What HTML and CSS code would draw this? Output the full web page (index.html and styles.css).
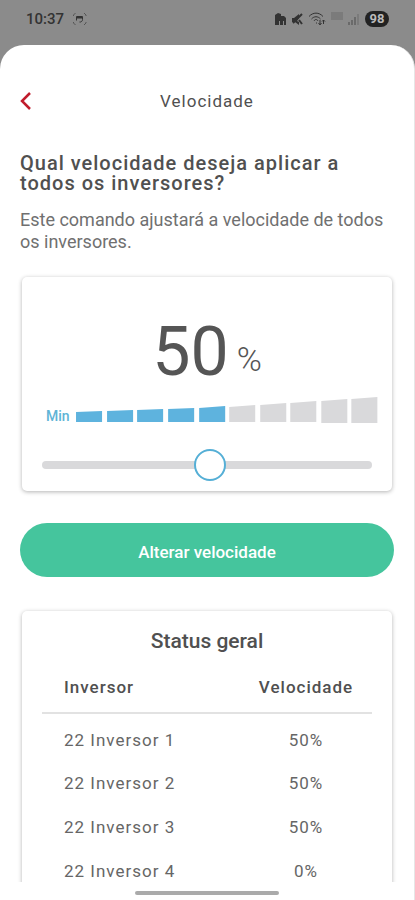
FILE: index.html
```html
<!DOCTYPE html>
<html lang="pt-BR">
<head>
<meta charset="UTF-8">
<meta name="viewport" content="width=device-width, initial-scale=1.0">
<title>Velocidade</title>

<link rel="stylesheet" href="styles.css">

</head>
<body>

<!-- Phone status bar -->
<div class="status-bar">
    <span class="clock">10:37</span>
    <svg class="capture-icon" width="16" height="14" viewBox="0 0 16 14" fill="none" stroke="#333" stroke-width="1">
        <path d="M1.500 4V3l2-2M12 1l2 2v1M1.500 10v1l2 2M12 13l2-2v-1" stroke="#555"/>
        <path d="M4.500 8.500V4.500h6v3a2.500 2.500 0 0 1-3 2.500"/>
        <path d="M5 5.500h5" stroke-width="2"/>
    </svg>

    <div class="status-icons">
        <svg width="12" height="14" viewBox="0 0 12 14" fill="#333">
            <path d="M1 3l3-2 3 1v2h3l2 2v7h-2V9H9v4H6V9H5v4H1z"/>
        </svg>
        <svg width="12" height="14" viewBox="0 0 12 14">
            <path d="M1 6h2l5-4v4l-2 3 2 1v3L4 10H1z" fill="#333"/>
            <path d="M11 2L2 11M8 8l3 4" stroke="#333" stroke-width="2" fill="none"/>
        </svg>
        <svg width="18" height="14" viewBox="0 0 18 14" fill="none" stroke="#333" stroke-width="1">
            <path d="M1 4.500C5 0 11 0 15 4.500M3.500 7C6 4 10 4 12.500 7M6 9c1-2 3-2 4 0"/>
            <path d="M8 11h1M12 8v4M10.500 11l1.500 2 1.500-2M15.500 12V8M14 9.500L15.500 8 17 9.500"/>
        </svg>
        <svg width="12" height="14" viewBox="0 0 12 14" fill="#7b7b7b">
            <path d="M0 0h12v8H0z"/>
        </svg>
        <svg width="12" height="14" viewBox="0 0 12 14" fill="#6a6a6a">
            <path d="M0 10h2v3H0zM3 8h2v5H3zM6 5h2v8H6z"/>
            <path d="M9 2h2v11H9z" fill="#7b7b7b"/>
        </svg>
        <span class="battery">98</span>
    </div>
</div>

<main class="sheet">
    <div class="scroll-area">
        <header class="top">
            <button class="back" type="button" aria-label="Voltar">
                <svg width="12" height="18" viewBox="0 0 12 18" fill="none" stroke="#c01c2c" stroke-width="2.500">
                    <path d="M10 1L2 9l8 8"/>
                </svg>
            </button>
            <h1>Velocidade</h1>
        </header>

        <h2 class="question">Qual velocidade deseja aplicar a todos os inversores?</h2>
        <p class="description">Este comando ajustará a velocidade de todos os inversores.</p>

        <section class="card speed-card">
            <div class="value">
                <span class="number">50</span>
                <span class="percent">%</span>
            </div>

            <div class="level">
                <label for="speed">Min</label>
                <svg class="bars" viewBox="0 0 302 28">
                    <g fill="#5eb3de">
                        <path d="M0 15l26-1v11H0z"/>
                        <path d="M31 14l26-1v12H31z"/>
                        <path d="M61 13l26-1v13H61z"/>
                        <path d="M92 12l26-1v14H92z"/>
                        <path d="M123 11l26-2v16h-26z"/>
                    </g>
                    <g fill="#d9d9db">
                        <path d="M153 10l26-2v17h-26z"/>
                        <path d="M184 8l26-2v19h-26z"/>
                        <path d="M214 6l26-2v21h-26z"/>
                        <path d="M245 4l26-2v24h-26z"/>
                        <path d="M275 2l26-2v26h-26z"/>
                    </g>
                </svg>
            </div>

            <input type="range" id="speed" class="slider" min="0" max="100" value="51">
        </section>

        <button class="apply" type="button">Alterar velocidade</button>

        <section class="card status-card">
            <h2>Status geral</h2>
            <table>
                <thead>
                    <tr><th scope="col">Inversor</th><th scope="col">Velocidade</th></tr>
                </thead>
                <tbody>
                    <tr><td>22 Inversor 1</td><td>50%</td></tr>
                    <tr><td>22 Inversor 2</td><td>50%</td></tr>
                    <tr><td>22 Inversor 3</td><td>50%</td></tr>
                    <tr><td>22 Inversor 4</td><td>0%</td></tr>
                </tbody>
            </table>
        </section>
    </div>

    <!-- Gesture bar of the phone -->
    <div class="gesture-bar"><span></span></div>
</main>

</body>
</html>
```
FILE: styles.css
```css
* {
    box-sizing: border-box;
}

body {
    margin: 0;
    height: 100vh;
    display: flex;
    flex-direction: column;
    background-color: #8b8b8b;
    color: #505050;
    font-family: Roboto, sans-serif;
    font-size: 17px;
}

h1, h2, p {
    margin: 0;
    font-weight: 500;
}

button {
    font-family: inherit;
    border: none;
    cursor: pointer;
}

/* Phone status bar */
.status-bar {
    display: flex;
    align-items: center;
    height: 45px;
    flex-shrink: 0;
    padding: 0 26px 7px;
}

.clock {
    font-size: 15px;
    font-weight: 500;
    color: #333;
    margin-right: 8px;
}

.status-icons {
    display: flex;
    align-items: center;
    gap: 5px;
    margin-left: auto;
}

.battery {
    width: 24px;
    height: 16px;
    border-radius: 8px;
    background-color: #222;
    color: #bbb;
    font-size: 13px;
    font-weight: 700;
    line-height: 16px;
    text-align: center;
}

/* White sheet over the darkened screen */
.sheet {
    flex: 1;
    min-height: 0;
    display: flex;
    flex-direction: column;
    background-color: #fff;
    border-radius: 24px 24px 0 0;
    border-right: 1px solid #e6e6e6;
}

.scroll-area {
    flex: 1;
    min-height: 0;
    overflow: hidden;
    padding: 0 20px;
}

.top {
    display: grid;
    grid-template-columns: 32px 1fr 32px;
    align-items: center;
    padding-top: 40px;
}

.top h1 {
    font-size: 17px;
    line-height: 32px;
    font-weight: 400;
    letter-spacing: 1px;
    text-align: center;
}

.back {
    display: flex;
    align-items: center;
    height: 32px;
    padding: 0;
    background: none;
}

.question {
    margin-top: 36px;
    font-size: 20px;
    line-height: 20px;
    letter-spacing: 1px;
}

.description {
    margin-top: 16px;
    font-size: 18px;
    line-height: 22px;
    font-weight: 400;
    color: #707070;
}

.card {
    margin: 0 2px;
    background-color: #fff;
    border-radius: 5px;
    box-shadow: 0 1px 4px rgba(0, 0, 0, 0.3);
}

/* Speed picker */
.speed-card {
    margin-top: 24px;
    padding: 40px 20px 10px;
}

.value {
    display: flex;
    justify-content: center;
    align-items: flex-end;
    gap: 8px;
    color: #555;
}

.number {
    font-size: 68px;
    line-height: 70px;
}

.percent {
    font-size: 34px;
    line-height: 56px;
    font-weight: 300;
}

.level {
    display: flex;
    align-items: flex-end;
    gap: 6px;
    padding-left: 4px;
    margin-right: -6px;
    margin-top: 10px;
}

.level label {
    font-size: 14px;
    line-height: 18px;
    font-weight: 500;
    color: #5fb4d6;
}

.bars {
    flex: 1;
    min-width: 0;
}

.slider {
    display: block;
    appearance: none;
    width: 100%;
    height: 32px;
    margin: 24px 0 0;
    background: none;
}

.slider::-webkit-slider-runnable-track {
    height: 8px;
    border-radius: 4px;
    background-color: #d9d9db;
}

.slider::-webkit-slider-thumb {
    appearance: none;
    width: 32px;
    height: 32px;
    margin-top: -12px;
    border: 2px solid #55afd6;
    border-radius: 50%;
    background-color: #fff;
}

.apply {
    display: block;
    width: 100%;
    height: 54px;
    padding-top: 5px;
    margin-top: 32px;
    border-radius: 27px;
    background-color: #45c59d;
    color: #fff;
    font-size: 17px;
    font-weight: 500;
}

/* Table with the state of every inverter */
.status-card {
    margin-top: 34px;
    padding: 16px 20px;
}

.status-card h2 {
    font-size: 21px;
    line-height: 28px;
    text-align: center;
}

table {
    width: 100%;
    margin-top: 4px;
    border-collapse: collapse;
    letter-spacing: 1px;
}

th {
    height: 54px;
    padding: 2px 0 0;
    border-bottom: 2px solid #e2e2e2;
    font-weight: 500;
    text-align: center;
}

td {
    height: 44px;
    padding: 0;
    color: #666;
    text-align: center;
}

tbody tr:first-child td {
    height: 48px;
    padding-top: 4px;
}

th:first-child, td:first-child {
    width: 60%;
    padding-left: 22px;
    text-align: left;
}

.gesture-bar {
    display: flex;
    justify-content: center;
    align-items: center;
    height: 18px;
    padding-top: 4px;
}

.gesture-bar span {
    width: 35%;
    height: 4px;
    border-radius: 2px;
    background-color: #aaa;
}
```
